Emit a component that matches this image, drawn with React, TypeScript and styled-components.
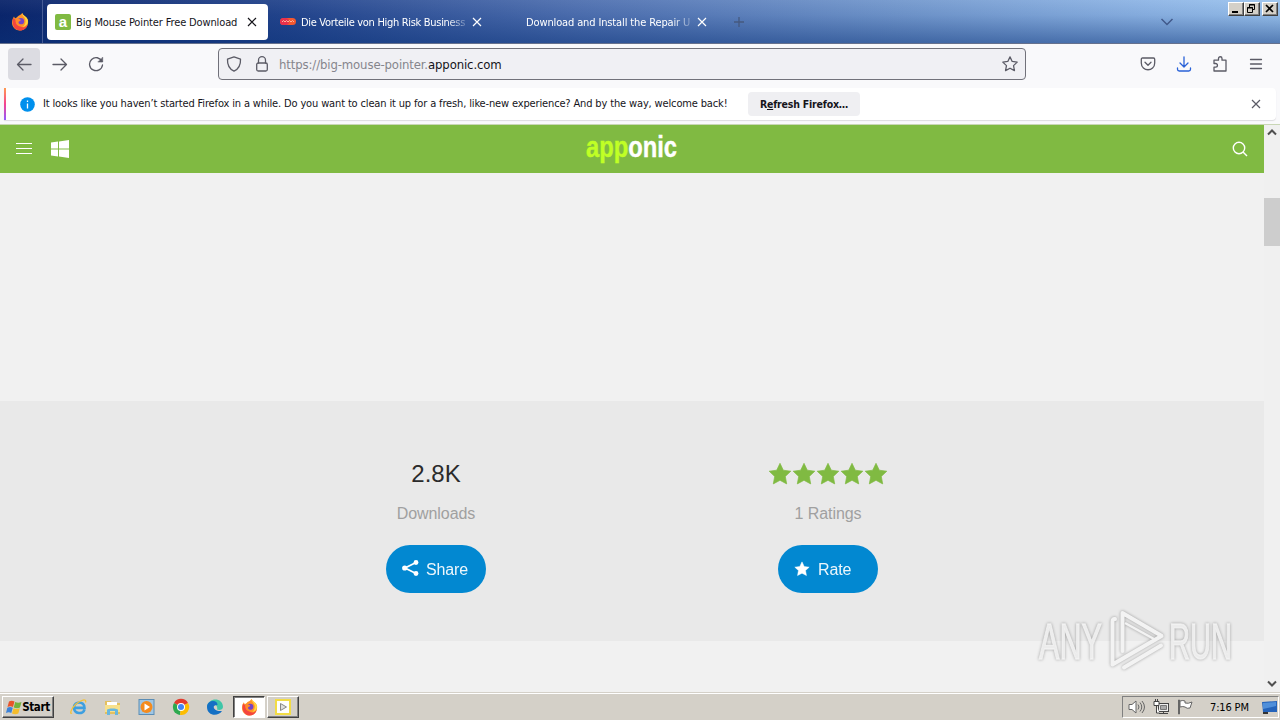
import React from 'react';
import styled, { createGlobalStyle } from 'styled-components';

const ui = '"DejaVu Sans Condensed", "DejaVu Sans", sans-serif';

const GlobalStyle = createGlobalStyle`
  * { box-sizing: border-box; }
  html, body { margin: 0; padding: 0; overflow: hidden; }
  body { font-family: ${ui}; font-stretch: condensed; font-size: 11px; color: #15141a; }
  svg { display: block; flex: none; }
`;

const Screen = styled.div`
  width: 1280px;
  height: 720px;
  display: flex;
  flex-direction: column;
  position: relative;
  overflow: hidden;
`;

const Label = styled.span<{ $w: number }>`
  display: block;
  flex: none;
  width: ${p => p.$w}px;
  white-space: nowrap;
`;

/* Title bar */
const TitleBar = styled.header`
  flex: none;
  height: 44px;
  display: flex;
  align-items: flex-start;
  background:
    linear-gradient(180deg, rgba(255,255,255,.05), rgba(10,50,120,.08) 35%, rgba(10,50,120,.5)),
    linear-gradient(90deg, #0a246a 0%, #23448c 22%, #4f70b0 45%, #7398cd 70%, #8fb6e6 90%, #9cc4ee 100%);
  border-bottom: 1px solid #66718d;
`;
const FirefoxSlot = styled.div`
  width: 43px;
  height: 43px;
  padding: 13px 0 0 11px;
  border-right: 1px solid #465c96;
`;
const Tab = styled.div<{ $active?: boolean }>`
  flex: none;
  width: ${p => (p.$active ? 221 : 225)}px;
  height: 36px;
  margin: 4px 0 0 4px;
  padding: 0 8px;
  display: flex;
  align-items: center;
  border-radius: 4px;
  color: ${p => (p.$active ? '#15141a' : '#fff')};
  background: ${p => (p.$active ? '#fff' : 'transparent')};
`;
const InactiveTabs = styled.div`
  display: flex;
  ${Tab} + ${Tab} { margin-left: 0; }
`;
const TabIcon = styled.span`
  width: 16px;
  height: 16px;
  margin-right: 5px;
  flex: none;
`;
const TabTitle = styled.span<{ $ls: number; $fade?: boolean }>`
  flex: none;
  width: 166px;
  overflow: hidden;
  white-space: nowrap;
  letter-spacing: ${p => p.$ls}px;
  line-height: 16px;
  padding-top: 2px;
  mask-image: ${p => (p.$fade ? 'linear-gradient(90deg, #000 88%, rgba(0,0,0,.2) 100%)' : 'none')};
`;
const TabClose = styled.span`
  margin-left: 5px;
`;
const TabTools = styled.div`
  display: flex;
  flex: 1;
  justify-content: space-between;
  padding: 16px 54px 0 11px;
`;
const WindowButtons = styled.div`
  display: flex;
  padding: 2px 2px 0 0;
`;
const WinButton = styled.span<{ $gap?: boolean }>`
  width: 16px;
  height: 14px;
  margin-left: ${p => (p.$gap ? 2 : 0)}px;
  background: #d4d0c8;
  border: 1px solid;
  border-color: #fff #404040 #404040 #fff;
  box-shadow: inset -1px -1px #808080;
`;

/* Navigation */
const NavBar = styled.nav`
  flex: none;
  height: 44px;
  display: flex;
  align-items: center;
  padding: 0 8px;
  background: #f9f9fb;
  padding-bottom: 4px;
`;
const NavButton = styled.span<{ $on?: boolean }>`
  width: 32px;
  height: 32px;
  margin-right: 4px;
  display: grid;
  place-items: center;
  border-radius: 4px;
  background: ${p => (p.$on ? '#dcdce2' : 'transparent')};
`;
const UrlBox = styled.div`
  width: 808px;
  height: 32px;
  margin: 0 0 0 102px;
  padding: 0 7px;
  display: flex;
  align-items: center;
  border: 1px solid #71717a;
  border-radius: 4px;
  background: #f0f0f4;
`;
const Url = styled.span`
  flex: 1;
  margin-left: 9px;
  font-size: 13px;
  letter-spacing: -0.12px;
  white-space: nowrap;
  color: #85858c;
  b { font-weight: 400; color: #15141a; }
`;
const NavTools = styled.div`
  display: flex;
  flex: 1;
  gap: 20px;
  justify-content: flex-end;
  padding-right: 8px;
`;

/* Notification */
const NoticeArea = styled.div`
  flex: none;
  height: 37px;
  padding: 0 4px;
  background: #f9f9fb;
  border-bottom: 1px solid #c9d6b6;
`;
const Notice = styled.div`
  height: 32px;
  display: flex;
  align-items: center;
  border-radius: 0 4px 4px 0;
  background: #fff;
  box-shadow: 0 1px 1px rgba(58,57,68,.15);
`;
const Stripe = styled.span`
  width: 2px;
  height: 32px;
  margin-right: 14px;
  background: linear-gradient(#ff9a50, #f5428f 50%, #9059ff);
`;
const NoticeText = styled(Label)`
  margin-left: 8px;
  padding-bottom: 1px;
  letter-spacing: -0.145px;
`;
const RefreshButton = styled.span`
  width: 112px;
  height: 24px;
  margin-left: 21px;
  border-radius: 4px;
  background: #efeff2;
  text-align: center;
  line-height: 25px;
  font-weight: 700;
  font-size: 10.5px;
  letter-spacing: -0.2px;
  white-space: nowrap;
`;
const NoticeClose = styled.span`
  margin: 0 15px 0 auto;
`;

/* Page */
const Viewport = styled.div`
  flex: none;
  height: 567px;
  display: flex;
`;
const Page = styled.main`
  flex: 1;
  display: flex;
  flex-direction: column;
  background: #f1f1f1;
  font-family: "Liberation Sans", Arial, sans-serif;
  font-stretch: normal;
`;
const SiteHeader = styled.header`
  height: 48px;
  padding: 0 16px;
  display: grid;
  grid-template-columns: 1fr 92px 1fr;
  align-items: center;
  background: #80ba42;
`;
const HeaderSide = styled.div<{ $end?: boolean }>`
  display: flex;
  gap: 19px;
  justify-content: ${p => (p.$end ? 'flex-end' : 'flex-start')};
  align-items: center;
`;
const Stats = styled.section`
  height: 240px;
  margin-top: 228px;
  padding: 0 240px;
  display: grid;
  grid-template-columns: 1fr 1fr;
  background: #e9e9e9;
`;
const Stat = styled.div`
  display: flex;
  flex-direction: column;
  align-items: center;
  padding-top: 57px;
`;
const StatValue = styled.div`
  height: 32px;
  display: flex;
  align-items: center;
  font-size: 24px;
  color: #2b2b2b;
`;
const StatName = styled.div`
  height: 24px;
  margin-top: 12px;
  line-height: 24px;
  font-size: 16px;
  letter-spacing: -0.08px;
  color: #a0a0a0;
`;
const Pill = styled.div`
  width: 100px;
  height: 48px;
  margin-top: 19px;
  padding-left: 16px;
  display: flex;
  gap: 8px;
  align-items: center;
  border-radius: 24px;
  background: #0288d1;
  color: #fff;
  font-size: 16px;
`;
const PillText = styled.span`
  padding-top: 1px;
  letter-spacing: -0.15px;
  opacity: .93;
`;
const Scrollbar = styled.aside`
  width: 16px;
  display: flex;
  flex-direction: column;
  align-items: center;
  justify-content: space-between;
  padding: 4px 0 5px;
  background: #f0f0f0;
`;
const Thumb = styled.span`
  width: 16px;
  height: 48px;
  margin: 62px 0 auto;
  background: #cdcdcd;
`;

/* Taskbar */
const Taskbar = styled.footer`
  flex: none;
  height: 28px;
  padding: 4px 2px 2px;
  display: flex;
  align-items: center;
  background: #d4d0c8;
  box-shadow: inset 0 1px #d4d0c8, inset 0 2px #fff;
`;
const TaskButton = styled.span<{ $w: number; $pressed?: boolean }>`
  width: ${p => p.$w}px;
  height: 22px;
  margin-right: 2px;
  display: flex;
  align-items: center;
  justify-content: center;
  background: ${p => (p.$pressed ? '#fff' : '#d4d0c8')};
  border: 1px solid;
  border-color: ${p => (p.$pressed ? '#404040 #fff #fff #404040' : '#fff #404040 #404040 #fff')};
  box-shadow: ${p => (p.$pressed ? 'inset 1px 1px #808080' : 'inset -1px -1px #808080')};
`;
const StartText = styled.b`
  font-size: 11.5px;
  color: #000;
  letter-spacing: -0.35px;
`;
const QuickLaunch = styled.div`
  display: flex;
  gap: 16px;
  padding: 0 9px 0 14px;
`;
const Tray = styled.div`
  width: 157px;
  height: 22px;
  margin-left: auto;
  margin-right: -1px;
  padding: 0 3px 0 5px;
  display: flex;
  gap: 8px;
  align-items: center;
  border: 1px solid;
  border-color: #808080 #fff #fff #808080;
`;
const Clock = styled(Label)`
  margin: 0 3px 0 9px;
  letter-spacing: -0.15px;
  color: #000;
`;
const Watermark = styled.div`
  position: absolute;
  left: 1030px;
  top: 603px;
`;

const Cross = ({ c, s = 10 }: { c: string; s?: number }) => (
  <svg width={s} height={s} viewBox="0 0 10 10" stroke={c} strokeWidth="1.2"><path d="M1 1l8 8M9 1l-8 8" /></svg>
);
const Firefox = ({ s = 18 }: { s?: number }) => (
  <svg width={s} height={s} viewBox="0 0 18 18">
    <path d="M3 3.500l1 2 2-1.200c1-2 3-1.500 4-3 .7-.5.8-1.300 1.500-1.300 0 2.500 4.800 3.500 5.500 7.500C17.800 13 14 17.500 9 17.500 4.500 17.500 1 14 1 9.500 1 7 2 5 3 3.500z" fill="#ff9328" />
    <path d="M2 5c-1 5 0 12 7 12.500 4 0 7-2.500 7.500-6-2 3-5 3.500-7 2C6 13 4 10 5 7z" fill="#f4453f" />
    <path d="M11 0c0 3 3 4 3.500 7 .5 3-1 6-3 7 4-.5 6-4 5.300-7C16 3.500 12 3 11 0z" fill="#ffd83d" />
    <circle cx="9.800" cy="8.300" r="3.300" fill="#7542c8" />
    <path d="M4.500 5.500c2-.5 3 .5 4.500.8 1 .4 1 1.300 0 1.600-1 .3-1.500.6-1.500 1.600 0 1.500 2 2.500 4 1.500-2 3-7.500 1-7-5.500z" fill="#ff8a2a" />
  </svg>
);
const starPath = 'M12 1.300l3.300 6.900 7.500 1-5.500 5.200 1.400 7.500L12 18.300l-6.700 3.600 1.400-7.500L1.200 9.200l7.500-1z';
const Star = ({ s, c }: { s: number; c: string }) => (
  <svg width={s} height={s} viewBox="0 0 24 24" fill={c}><path d={starPath} stroke={c} strokeWidth=".7" strokeLinejoin="round" /></svg>
);
const line = { fill: 'none', stroke: '#5b5b66', strokeWidth: 1.3, strokeLinecap: 'round' as const, strokeLinejoin: 'round' as const };

const WatermarkArt = () => (
  <svg width="215" height="76" viewBox="1030 603 215 76" style={{ filter: 'drop-shadow(0 0 1.5px rgba(0,0,0,.35))' }}>
    <g fill="#f3f3f3" fillOpacity=".9" stroke="#f3f3f3" strokeWidth="1.400" strokeOpacity=".8" fontFamily="Liberation Sans, sans-serif" fontSize="50">
      <text x="1039" y="658.500" textLength="63" lengthAdjust="spacingAndGlyphs">ANY</text>
      <text x="1169" y="658.500" textLength="63" lengthAdjust="spacingAndGlyphs">RUN</text>
    </g>
    <g fill="none" stroke="#f3f3f3" strokeWidth="4" strokeLinecap="round" strokeLinejoin="round">
      <path d="M1115 619q-2.500-.5-2.500 3v42.500l49-28.500" />
      <path d="M1122.500 651v-38l38.500 22.500" />
      <path d="M1124 667.500l37-22" />
    </g>
    <path d="M1125 623l29 16" stroke="#f3f3f3" strokeWidth="2.500" />
  </svg>
);

export default function App() {
  return (
    <Screen>
      <GlobalStyle />
      <TitleBar>
        <FirefoxSlot><Firefox /></FirefoxSlot>
        <Tab $active>
          <TabIcon>
            <svg width="16" height="16"><rect width="16" height="16" rx="2" fill="#80ba42" /><text x="8" y="12.500" textAnchor="middle" fontFamily="Liberation Sans, sans-serif" fontWeight="700" fontSize="15" fill="#fff">a</text></svg>
          </TabIcon>
          <TabTitle $ls={-0.13}>Big Mouse Pointer Free Download</TabTitle>
          <TabClose><Cross c="#15141a" /></TabClose>
        </Tab>
        <InactiveTabs>
          <Tab>
            <TabIcon>
              <svg width="16" height="16"><rect y="4" width="16" height="7" rx="3.500" fill="#f4582f" /><rect y="4" width="9" height="7" rx="3.500" fill="#e8304e" /><path d="M2 8l1.500-1.500L5 8l1.500-1.500L8 8l1.500-1.500L11 8l1.500-1.500L14 8" fill="none" stroke="#ffb59a" /></svg>
            </TabIcon>
            <TabTitle $ls={-0.31} $fade>Die Vorteile von High Risk Business</TabTitle>
            <TabClose><Cross c="#fff" /></TabClose>
          </Tab>
          <Tab>
            <TabIcon />
            <TabTitle $ls={-0.13} $fade>Download and Install the Repair U</TabTitle>
            <TabClose><Cross c="#fff" /></TabClose>
          </Tab>
        </InactiveTabs>
        <TabTools>
          <svg width="12" height="12" stroke="#46597f" strokeWidth="1.300"><path d="M6 1v10M1 6h10" /></svg>
          <svg width="14" height="12" fill="none" stroke="#41598a" strokeWidth="1.500"><path d="M1.500 3L7 8.500 12.500 3" /></svg>
        </TabTools>
        <WindowButtons>
          <WinButton><svg width="14" height="12"><path d="M3 9h6" stroke="#000" strokeWidth="2" /></svg></WinButton>
          <WinButton><svg width="14" height="12" fill="none" stroke="#000"><path d="M4.500 4V1.500h5v5H8M4 2h6M2.500 4.500h5v5h-5zM2 5h6" /></svg></WinButton>
          <WinButton $gap><svg width="14" height="12" stroke="#000" strokeWidth="1.700"><path d="M3 2l7 7M10 2L3 9" /></svg></WinButton>
        </WindowButtons>
      </TitleBar>

      <NavBar>
        <NavButton $on><svg width="16" height="16" {...line}><path d="M15 8.500H1.500M7 3L1.500 8.500 7 14" /></svg></NavButton>
        <NavButton><svg width="16" height="16" {...line}><path d="M1 8.500h13.500M9 3l5.500 5.500L9 14" /></svg></NavButton>
        <NavButton><svg width="16" height="16" {...line}><path d="M14 5.500A6.500 6.500 0 1 0 14.500 9" /><path d="M14.700 1.500V6h-4.500z" fill="#5b5b66" strokeWidth=".6" /></svg></NavButton>
        <UrlBox>
          <svg width="16" height="16" {...line}><path d="M8 .9l6.500 2.300c.3 5.500-1.500 9.500-6.500 12-5-2.500-6.800-6.500-6.500-12z" /></svg>
          <svg width="16" height="16" style={{ marginLeft: 12 }} {...line}><rect x="2.700" y="7" width="10.600" height="8" rx="1.500" /><path d="M4.500 7V4.200a3.500 3.500 0 0 1 7 0V7" /></svg>
          <Url>https://big-mouse-pointer.<b>apponic.com</b></Url>
          <svg width="16" height="16" viewBox="0 0 24 24" {...line} strokeWidth={1.9}><path d={starPath} /></svg>
        </UrlBox>
        <NavTools>
          <svg width="16" height="16" {...line}><path d="M2.500 2h11c.8 0 1.200.5 1.200 1.200V7c0 9-13.400 9-13.400 0V3.200C1.300 2.500 1.700 2 2.500 2zM5 6.200l3 3 3-3" /></svg>
          <svg width="16" height="16" {...line} stroke="#2a62d8"><path d="M8 .8v10M4 7l4 4 4-4M1.500 12v1.300c0 1 .7 1.700 1.700 1.700h9.600c1 0 1.700-.7 1.700-1.700V12" /></svg>
          <svg width="16" height="16" {...line}><path d="M2 7.500V4.200h4.500V2.500a1.500 1.500 0 0 1 3.500 0v1.700h4V15H2v-3.800h1.600a1.700 1.700 0 0 0 0-3.700z" /></svg>
          <svg width="16" height="16" {...line}><path d="M2.500 3.500h11M2.500 8h11M2.500 12.500h11" /></svg>
        </NavTools>
      </NavBar>

      <NoticeArea>
        <Notice>
          <Stripe />
          <svg width="15" height="15"><circle cx="7.500" cy="7.500" r="7.300" fill="#0090ed" /><path d="M7.500 6.500v5M7.500 3.500v1.500" stroke="#fff" strokeWidth="1.300" /></svg>
          <NoticeText $w={684}>It looks like you haven’t started Firefox in a while. Do you want to clean it up for a fresh, like-new experience? And by the way, welcome back!</NoticeText>
          <RefreshButton>R<u>e</u>fresh Firefox…</RefreshButton>
          <NoticeClose><Cross c="#5b5b66" /></NoticeClose>
        </Notice>
      </NoticeArea>

      <Viewport>
        <Page>
          <SiteHeader>
            <HeaderSide>
              <svg width="16" height="12" stroke="#fff"><path d="M0 .5h16M0 5.500h16M0 10.500h16" /></svg>
              <svg width="18" height="18" fill="#fff"><path d="M0 2.600l7-1v7H0zM8 1.400L18 0v8.600H8zM0 9.500h7v7l-7-1zM8 9.500h10V18L8 16.600z" /></svg>
            </HeaderSide>
            <svg width="92" height="40" overflow="visible" fontFamily="Liberation Sans, sans-serif" fontWeight="700" fontSize="29.500" stroke="#fff" strokeWidth=".4">
              <text x="0" y="28" textLength="91" lengthAdjust="spacingAndGlyphs" fill="#fff"><tspan fill="#c0ff25" stroke="#c0ff25">app</tspan>onic</text>
            </svg>
            <HeaderSide $end>
              <svg width="16" height="16" fill="none" stroke="#fff" strokeWidth="1.400"><circle cx="7" cy="7" r="5.700" /><path d="M11 11l4 4" /></svg>
            </HeaderSide>
          </SiteHeader>
          <Stats>
            <Stat>
              <StatValue>2.8K</StatValue>
              <StatName>Downloads</StatName>
              <Pill>
                <svg width="16" height="18" overflow="visible" fill="#fff"><path d="M14 2.500L3 8l11 5.500" fill="none" stroke="#fff" strokeWidth="1.800" /><circle cx="14" cy="2.500" r="2.400" /><circle cx="2.700" cy="8" r="2.600" /><circle cx="14" cy="13.500" r="2.400" /></svg>
                <PillText>Share</PillText>
              </Pill>
            </Stat>
            <Stat>
              <StatValue>{[0, 1, 2, 3, 4].map(i => <Star key={i} s={24} c="#80ba42" />)}</StatValue>
              <StatName>1 Ratings</StatName>
              <Pill>
                <Star s={16} c="#fff" />
                <PillText>Rate</PillText>
              </Pill>
            </Stat>
          </Stats>
        </Page>
        <Scrollbar>
          <svg width="10" height="7" fill="none" stroke="#505050" strokeWidth="2"><path d="M1 5.500l4-4 4 4" /></svg>
          <Thumb />
          <svg width="10" height="7" fill="none" stroke="#505050" strokeWidth="2"><path d="M1 1.500l4 4 4-4" /></svg>
        </Scrollbar>
      </Viewport>

      <Taskbar>
        <TaskButton $w={52}>
          <svg width="16" height="15"><path d="M3 1.500c2-1.200 3.500-1 5.500 0L7 7c-2-1-3.500-1-5.500 0z" fill="#e8542a" /><path d="M9.200 2c2 1 4 1 6.300 0L14 7.500c-2 1-4 1-6.300 0z" fill="#73b33c" /><path d="M1.300 7.700c2-1 3.500-1 5.500 0L5.300 13c-1.500-1-3.500-1-5.300 0z" fill="#3c82d8" /><path d="M7.500 8.300c2 1 4 1 6.300 0L12.300 13.500c-2 1-4 1-6.300 0z" fill="#f5bd2c" /></svg>
          <StartText>Start</StartText>
        </TaskButton>
        <QuickLaunch>
          <svg width="18" height="18" fill="none"><path d="M14.500 11.500c-1 5-10.500 5-10.500-2 0-6.500 10.500-7 10.500.4H5" stroke="#3d9fe0" strokeWidth="2.600" /><path d="M2 15c-3 2-.5-5 4-9s11-6 9.500-1.500" stroke="#f3c13a" strokeWidth="1.300" /></svg>
          <svg width="18" height="18"><path d="M1 3h6l1 2h8v11H1z" fill="#e3c060" /><path d="M3 4h10v4H3z" fill="#fff" /><path d="M1 7h15v7H1z" fill="#f7e08c" /><path d="M3 17v-5c0-2 11-2 11 0v5h-3v-4H6v4z" fill="#69b7df" /></svg>
          <svg width="18" height="18"><rect x="1" y="1.500" width="15" height="15" fill="#9fc6e4" stroke="#5b8db5" /><circle cx="8.500" cy="9" r="6" fill="#f48b1e" /><path d="M6.500 5.500v7l5.500-3.500z" fill="#fff" /></svg>
          <svg width="18" height="18"><path d="M9 9L2 5a8 8 0 0 1 14 0z" fill="#e33b2e" /><path d="M9 9L2 5a8 8 0 0 0 6 12z" fill="#2da94f" /><path d="M9 9l7-4a8 8 0 0 1-8 12z" fill="#fdbd00" /><circle cx="9" cy="9" r="4" fill="#fff" /><circle cx="9" cy="9" r="3" fill="#4285f4" /></svg>
          <svg width="18" height="18"><path d="M1 9c1-10 16-10 16 0 0 3-4 3.500-6 2.500 1-3-1-5-4-5S1.500 8 1 9z" fill="#3fc6a8" /><path d="M1 9c0-4 3-6.500 7-6 2 .3 3.500 2 3.500 4-6-1-5 7 4.500 6-4 6-15 5-15-4z" fill="#1470c4" /></svg>
        </QuickLaunch>
        <TaskButton $w={32} $pressed><Firefox s={17} /></TaskButton>
        <TaskButton $w={32}><svg width="16" height="16"><rect x="1" y="1" width="14" height="14" fill="#fff" stroke="#f2dc45" strokeWidth="2" /><path d="M5.500 4.500v7l6-3.500z" fill="#ddd" stroke="#888" /></svg></TaskButton>
        <Tray>
          <svg width="17" height="16" fill="none" stroke="#666"><path d="M1 5.500h3L8 2v12l-4-3.500H1z" fill="#fff" /><path d="M10 5.500q2 2.500 0 5M12 3.500q3.500 4.500 0 9M14 2q5 6 0 12" /></svg>
          <svg width="16" height="16" fill="none" stroke="#444"><rect x="5.500" y="4.500" width="10" height="8" fill="#eee" /><path d="M7.500 6.500h6v4h-6z" fill="#aaa" stroke="#777" /><path d="M6 14.500h9M10.500 13v2" /><path d="M1 2.500h5v4H1zM2.500 0v2M4.500 0v2M3.500 6v8h3" fill="#fff" /></svg>
          <svg width="16" height="16" stroke="#666" fill="#fff"><path d="M1.500 1v14h1V1zM3 2q3-1 5 0v2q3 1 7-1l-2 6q-3 1-5-1-2-1-5 0z" /></svg>
          <Clock $w={41}>7:16 PM</Clock>
          <svg width="16" height="15"><path d="M0 2l15-1v11H1z" fill="#2463ba" /><path d="M1 3l13-1v4L1 9z" fill="#4f8fda" /><path d="M1 12h5v2H1z" fill="#333" /></svg>
        </Tray>
      </Taskbar>
      <Watermark><WatermarkArt /></Watermark>
    </Screen>
  );
}
